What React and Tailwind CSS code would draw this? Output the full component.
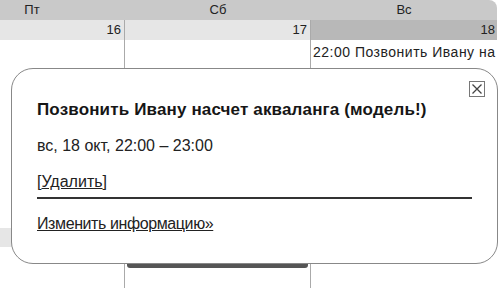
import React from "react";

const font = { fontFamily: '"Liberation Sans", Arial, sans-serif' };

function Col({ children, className = "" }) {
  return <div className={`w-[186px] shrink-0 ${className}`}>{children}</div>;
}

export default function App() {
  return (
    <div className="relative w-[500px] h-[288px] overflow-hidden bg-white text-[#222]" style={font}>
      {/* calendar */}
      <div className="ml-[-61px] w-[558px] flex flex-col">
        {/* header */}
        <div className="flex h-[20px] bg-[#c9c9c9] rounded-tr-[8px] text-[13px] leading-[20px] text-[#222]">
          <Col className="text-center">Пт</Col>
          <Col className="text-center">Сб</Col>
          <Col className="text-center">Вс</Col>
        </div>
        {/* week 1 date row */}
        <div className="flex h-[20px] text-[13px] leading-[20px]">
          <Col className="bg-[#e6e6e6] border-r border-[#aaa] text-right pr-[3px]">16</Col>
          <Col className="bg-[#e6e6e6] border-r border-[#aaa] text-right pr-[3px]">17</Col>
          <Col className="bg-[#b8b8b8] text-right pr-[2px]">18</Col>
        </div>
        {/* week 1 content */}
        <div className="flex h-[188px] text-[14px] leading-[18px] tracking-[0.5px]">
          <Col className="border-r border-[#aaa]" />
          <Col className="border-r border-[#aaa]" />
          <Col className="pl-[2px] pt-[3px] whitespace-nowrap overflow-hidden">22:00 Позвонить Ивану на</Col>
        </div>
        {/* week 2 date row */}
        <div className="flex h-[19px]">
          <Col className="bg-[#e6e6e6] border-r border-[#aaa]" />
          <Col className="bg-[#e6e6e6] border-r border-[#aaa]" />
          <Col className="bg-[#e6e6e6]" />
        </div>
        {/* week 2 content */}
        <div className="flex h-[41px]">
          <Col className="border-r border-[#aaa]" />
          <Col className="border-r border-[#aaa] pt-[2px] px-[2px]">
            <div className="h-[19px] bg-[#555] rounded-b-[3px]" />
          </Col>
          <Col />
        </div>
      </div>

      {/* popup */}
      <div className="absolute left-[11px] top-[68px] w-[487px] h-[196px] bg-white border border-[#888] rounded-[22px]">
        <div className="absolute right-[12px] top-[12px] w-[16px] h-[16px] border border-[#777] bg-white flex items-center justify-center">
          <svg width="12" height="12" viewBox="0 0 12 12">
            <path d="M1.5 1.5 L10.5 10.5 M10.5 1.5 L1.5 10.5" stroke="#444" strokeWidth="1.3" />
          </svg>
        </div>
        <div className="pl-[25px] pr-[25px] pt-[31px] flex flex-col">
          <div className="text-[17px] leading-[20px] font-bold tracking-[0.15px] text-[#161616] whitespace-nowrap">
            Позвонить Ивану насчет акваланга (модель!)
          </div>
          <div className="mt-[16px] text-[16px] leading-[20px] text-[#222]">вс, 18 окт, 22:00 – 23:00</div>
          <div className="mt-[16px] text-[16px] leading-[20px] text-[#222]">
            [<span className="underline">Удалить</span>]
          </div>
          <div className="mt-[5px] h-[2px] bg-[#333] w-[435px]" />
          <div className="mt-[15px] text-[16px] leading-[20px] tracking-[-0.4px] text-[#222]">
            <span className="underline">Изменить информацию»</span>
          </div>
        </div>
      </div>
    </div>
  );
}
